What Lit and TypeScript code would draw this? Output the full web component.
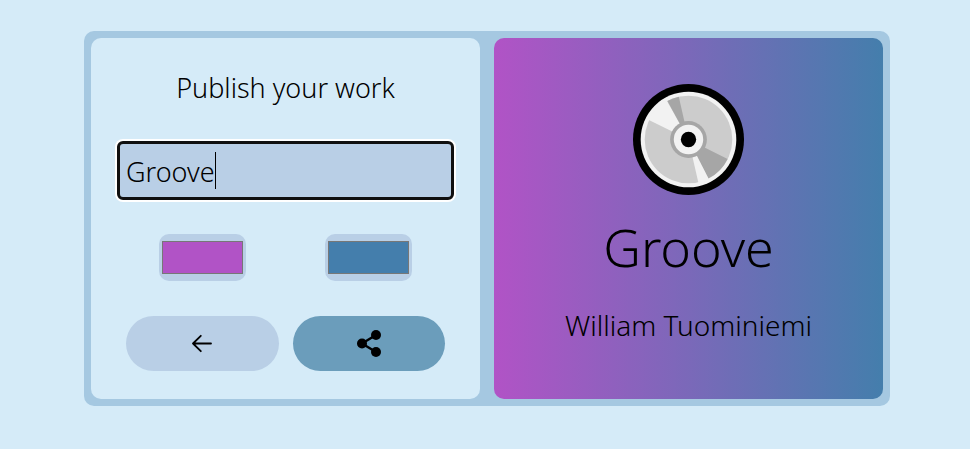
import { LitElement, html, css } from "lit";
import { customElement, state } from "lit/decorators.js";
import { styleMap } from "lit/directives/style-map.js";

@customElement("app-root")
export class AppRoot extends LitElement {
  @state() private title_ = "Groove";
  @state() private from = "#b153c6";
  @state() private to = "#447eac";

  static styles = css`
    :host {
      display: block;
      box-sizing: border-box;
      min-height: 100vh;
      padding: 31px 80px 43px 84px;
      background: #d5ebf8;
      color: #000;
      font-family: "Segoe UI", "Noto Sans", "Open Sans", sans-serif;
      font-size: 27px;
      font-weight: 350;
      line-height: 36px;
    }
    * {
      box-sizing: border-box;
    }
    .card {
      display: grid;
      grid-template-columns: 1fr 1fr;
      gap: 14px;
      padding: 7px;
      border-radius: 10px;
      background: #a5c8e1;
    }
    .panel {
      display: flex;
      flex-direction: column;
      border-radius: 10px;
    }
    .form {
      padding: 32px 26px 28px;
      background: #d5ebf8;
    }
    .heading {
      margin: 0;
      font: inherit;
      text-align: center;
    }
    .field {
      position: relative;
      margin-top: 35px;
    }
    .name {
      display: block;
      width: 100%;
      height: 59px;
      padding: 2px 6px 0;
      border: 3px solid #101010;
      border-radius: 6px;
      outline: none;
      box-shadow: 0 0 0 2px #fff;
      background: #b9cfe6;
      color: inherit;
      font: inherit;
    }
    .caret {
      position: absolute;
      left: 98px;
      top: 11px;
      width: 1px;
      height: 37px;
      background: #000;
    }
    .pair {
      display: grid;
      grid-template-columns: 1fr 1fr;
      gap: 14px;
      padding: 0 9px;
      justify-items: center;
    }
    .colors {
      margin-top: 34px;
    }
    .swatch {
      appearance: none;
      width: 87px;
      height: 47px;
      padding: 7px 3px;
      border: 0;
      border-radius: 10px;
      background: #b9cfe6;
    }
    .swatch::-webkit-color-swatch-wrapper {
      padding: 0;
    }
    .swatch::-webkit-color-swatch {
      border: 1px solid #777;
      border-radius: 0;
    }
    .actions {
      margin-top: 35px;
    }
    .button {
      display: flex;
      align-items: center;
      justify-content: center;
      width: 100%;
      height: 55px;
      padding: 0;
      border: 0;
      border-radius: 28px;
      background: #b9cfe6;
      color: inherit;
    }
    .share {
      background: #6b9dbb;
    }
    .preview {
      align-items: center;
      padding: 46px 20px 45px;
      text-align: center;
    }
    .disc {
      display: block;
    }
    .title {
      margin: 16px 0 0;
      font-size: 52px;
      font-weight: 350;
      line-height: 72px;
    }
    .author {
      margin: 24px 0 0;
      font-size: 28px;
    }
  `;

  render() {
    return html`
      <main class="card">
        <section class="panel form">
          <h1 class="heading">Publish your work</h1>
          <div class="field">
            <input
              class="name"
              type="text"
              aria-label="Title"
              .value=${this.title_}
              @input=${(e: Event) => (this.title_ = (e.target as HTMLInputElement).value)}
            />
            <span class="caret"></span>
          </div>
          <div class="pair colors">
            <input
              class="swatch"
              type="color"
              aria-label="Start colour"
              .value=${this.from}
              @input=${(e: Event) => (this.from = (e.target as HTMLInputElement).value)}
            />
            <input
              class="swatch"
              type="color"
              aria-label="End colour"
              .value=${this.to}
              @input=${(e: Event) => (this.to = (e.target as HTMLInputElement).value)}
            />
          </div>
          <div class="pair actions">
            <button class="button" type="button" aria-label="Back">
              <svg width="20" height="19" viewBox="0 0 20 19" fill="none" stroke="currentColor" stroke-width="1.8" stroke-linecap="round" stroke-linejoin="round">
                <path d="M19 9.5H1M8.8 1.8 1 9.5l7.8 7.7" />
              </svg>
            </button>
            <button class="button share" type="button" aria-label="Share">
              <svg width="24" height="27" viewBox="0 0 24 27">
                <path d="M19 5 5 13.5l14 8.5" fill="none" stroke="currentColor" stroke-width="2.4" />
                <circle cx="19" cy="5" r="5" />
                <circle cx="5" cy="13.5" r="5" />
                <circle cx="19" cy="22" r="5" />
              </svg>
            </button>
          </div>
        </section>
        <section
          class="panel preview"
          style=${styleMap({ background: `linear-gradient(to right, ${this.from}, ${this.to})` })}
        >
          <svg class="disc" width="111" height="111" viewBox="-166 -166 332 332" aria-hidden="true">
            <circle r="166" />
            <circle r="143" fill="#f2f2f2" />
            <circle r="131" fill="#ccc" />
            <path d="M0 0-120-59A134 134 0 0 1-65-117Z" fill="#f2f2f2" />
            <path d="M0 0-63-115A131 131 0 0 1-29-128Z" fill="#a6a6a6" />
            <path d="M0 0 117 58A131 131 0 0 1 59 117Z" fill="#a6a6a6" />
            <path d="M0 0 61 119A134 134 0 0 1 30 131Z" fill="#f2f2f2" />
            <circle r="55" fill="#a6a6a6" />
            <circle r="44" fill="#f2f2f2" />
            <circle r="23" />
          </svg>
          <h2 class="title">${this.title_}</h2>
          <p class="author">William Tuominiemi</p>
        </section>
      </main>
    `;
  }
}
